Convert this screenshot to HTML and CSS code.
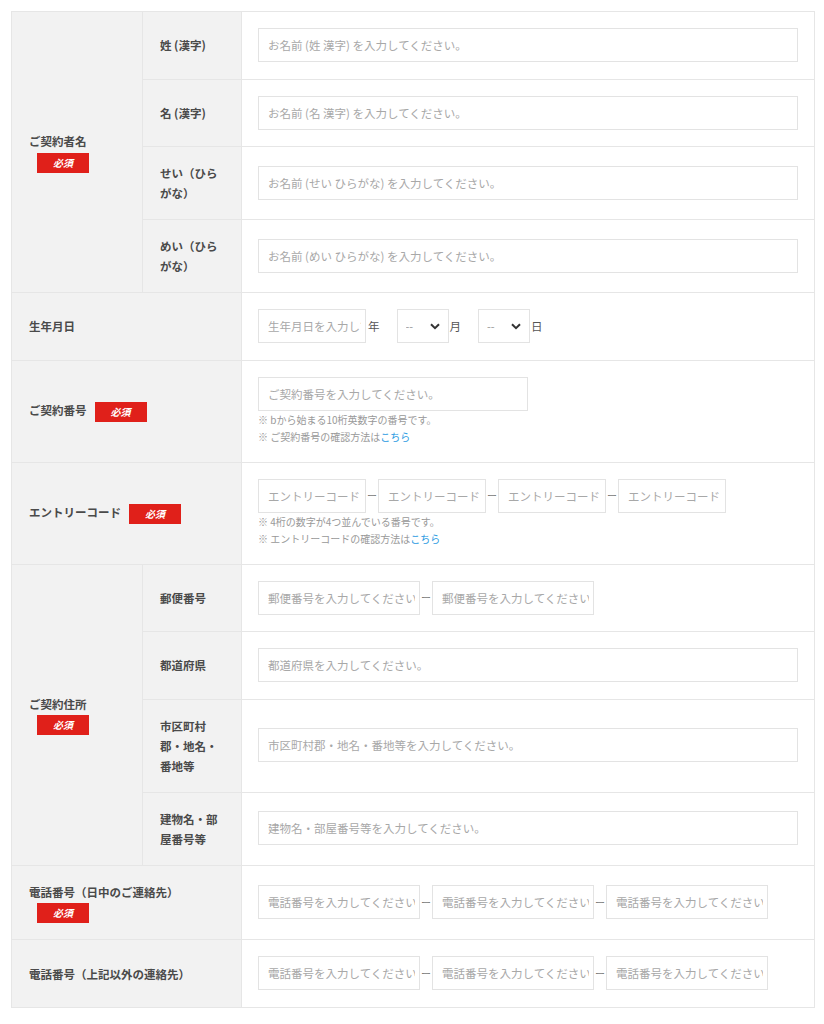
FILE: index.html
```html
<!DOCTYPE html>
<html lang="ja">
<head>
    <meta charset="UTF-8">
    <meta name="viewport" content="width=device-width, initial-scale=1.0">
    <title>ご契約者情報の入力</title>
    <link rel="stylesheet" href="styles.css">
</head>
<body>
    <table class="form-table">
        <colgroup>
            <col class="col-main">
            <col class="col-sub">
            <col>
        </colgroup>
        <tr>
            <th rowspan="4">ご契約者名<span class="badge">必須</span></th>
            <th class="sub">姓 (漢字)</th>
            <td><input class="field" type="text" placeholder="お名前 (姓 漢字) を入力してください。"></td>
        </tr>
        <tr>
            <th class="sub">名 (漢字)</th>
            <td><input class="field" type="text" placeholder="お名前 (名 漢字) を入力してください。"></td>
        </tr>
        <tr>
            <th class="sub">せい（ひらがな）</th>
            <td><input class="field" type="text" placeholder="お名前 (せい ひらがな) を入力してください。"></td>
        </tr>
        <tr>
            <th class="sub">めい（ひらがな）</th>
            <td><input class="field" type="text" placeholder="お名前 (めい ひらがな) を入力してください。"></td>
        </tr>
        <tr>
            <th colspan="2">生年月日</th>
            <td>
                <div class="inline-fields">
                    <span class="date-part"><input class="field field-s" type="text" placeholder="生年月日を入力してください">年</span>
                    <span class="date-part">
                        <span class="select-wrap">
                            <select class="select"><option>--</option></select>
                            <svg class="chevron" width="10" height="7" viewBox="0 0 10 7"><path d="M1 1.2 5 5.2 9 1.2" fill="none" stroke="#333" stroke-width="2"/></svg>
                        </span>月
                    </span>
                    <span class="date-part">
                        <span class="select-wrap">
                            <select class="select"><option>--</option></select>
                            <svg class="chevron" width="10" height="7" viewBox="0 0 10 7"><path d="M1 1.2 5 5.2 9 1.2" fill="none" stroke="#333" stroke-width="2"/></svg>
                        </span>日
                    </span>
                </div>
            </td>
        </tr>
        <tr>
            <th colspan="2">ご契約番号<span class="badge">必須</span></th>
            <td>
                <input class="field field-l" type="text" placeholder="ご契約番号を入力してください。">
                <p class="note">※ bから始まる10桁英数字の番号です。</p>
                <p class="note">※ ご契約番号の確認方法は<a href="#">こちら</a></p>
            </td>
        </tr>
        <tr>
            <th colspan="2">エントリーコード<span class="badge">必須</span></th>
            <td>
                <div class="inline-fields">
                    <input class="field field-s" type="text" placeholder="エントリーコード">
                    <span class="dash">ー</span>
                    <input class="field field-s" type="text" placeholder="エントリーコード">
                    <span class="dash">ー</span>
                    <input class="field field-s" type="text" placeholder="エントリーコード">
                    <span class="dash">ー</span>
                    <input class="field field-s" type="text" placeholder="エントリーコード">
                </div>
                <p class="note">※ 4桁の数字が4つ並んでいる番号です。</p>
                <p class="note">※ エントリーコードの確認方法は<a href="#">こちら</a></p>
            </td>
        </tr>
        <tr>
            <th rowspan="4">ご契約住所<span class="badge">必須</span></th>
            <th class="sub">郵便番号</th>
            <td>
                <div class="inline-fields">
                    <input class="field field-m" type="text" placeholder="郵便番号を入力してください">
                    <span class="dash">ー</span>
                    <input class="field field-m" type="text" placeholder="郵便番号を入力してください">
                </div>
            </td>
        </tr>
        <tr>
            <th class="sub">都道府県</th>
            <td><input class="field" type="text" placeholder="都道府県を入力してください。"></td>
        </tr>
        <tr>
            <th class="sub">市区町村郡・地名・番地等</th>
            <td><input class="field" type="text" placeholder="市区町村郡・地名・番地等を入力してください。"></td>
        </tr>
        <tr>
            <th class="sub">建物名・部屋番号等</th>
            <td><input class="field" type="text" placeholder="建物名・部屋番号等を入力してください。"></td>
        </tr>
        <tr>
            <th colspan="2">電話番号（日中のご連絡先）<span class="badge">必須</span></th>
            <td>
                <div class="inline-fields">
                    <input class="field field-m" type="text" placeholder="電話番号を入力してください">
                    <span class="dash">ー</span>
                    <input class="field field-m" type="text" placeholder="電話番号を入力してください">
                    <span class="dash">ー</span>
                    <input class="field field-m" type="text" placeholder="電話番号を入力してください">
                </div>
            </td>
        </tr>
        <tr>
            <th colspan="2">電話番号（上記以外の連絡先）</th>
            <td>
                <div class="inline-fields">
                    <input class="field field-m" type="text" placeholder="電話番号を入力してください">
                    <span class="dash">ー</span>
                    <input class="field field-m" type="text" placeholder="電話番号を入力してください">
                    <span class="dash">ー</span>
                    <input class="field field-m" type="text" placeholder="電話番号を入力してください">
                </div>
            </td>
        </tr>
    </table>
</body>
</html>
```

FILE: styles.css
```css
body {
    margin: 0;
    padding: 11px 9px 16px 11px;
    background-color: #fff;
    font-family: "Noto Sans CJK JP", "Noto Sans", sans-serif;
    color: #4a4a4a;
}

.form-table {
    width: 804px;
    border-collapse: collapse;
    table-layout: fixed;
}

.col-main {
    width: 131px;
}

.col-sub {
    width: 99px;
}

.form-table th,
.form-table td {
    border: 1px solid #e6e6e6;
    vertical-align: middle;
}

.form-table th {
    padding: 16px 17px;
    background-color: #f2f2f2;
    text-align: left;
    font-size: 11.5px;
    font-weight: bold;
    line-height: 20px;
    color: #4a4a4a;
}

.form-table td {
    padding: 16px 16px 16.5px;
    background-color: #fff;
}

.badge {
    display: inline-block;
    width: 52px;
    height: 20px;
    margin-left: 8px;
    background-color: #e0201a;
    color: #fff;
    font-size: 10px;
    font-weight: bold;
    font-style: italic;
    line-height: 20px;
    text-align: center;
    vertical-align: middle;
}

.field {
    display: block;
    box-sizing: border-box;
    width: 100%;
    height: 34px;
    margin: 0;
    padding: 0 4px 0 9px;
    border: 1px solid #e3e3e3;
    border-radius: 0;
    background-color: #fff;
    font-family: inherit;
    font-size: 11.5px;
    color: #333;
    outline: none;
}

.field::placeholder {
    color: #a8a8a8;
}

.field-s {
    width: 108px;
}

.field-m {
    width: 162px;
}

.field-l {
    width: 270px;
}

.inline-fields {
    display: flex;
    align-items: center;
}

.date-part {
    display: flex;
    align-items: center;
    margin-right: 17px;
    font-size: 11.5px;
    color: #555;
}

.date-part .field {
    margin-right: 2px;
}

.select-wrap {
    position: relative;
    display: block;
    margin-right: 1px;
}

.select {
    display: block;
    box-sizing: border-box;
    width: 52px;
    height: 34px;
    padding: 0 0 0 8px;
    border: 1px solid #e3e3e3;
    border-radius: 0;
    background-color: #fff;
    font-family: inherit;
    font-size: 11px;
    color: #999;
    appearance: none;
    -webkit-appearance: none;
}

.chevron {
    position: absolute;
    top: 14px;
    right: 9px;
    pointer-events: none;
}

.dash {
    width: 12px;
    text-align: center;
    font-size: 10px;
    color: #777;
}

.note {
    margin: 0;
    font-size: 10px;
    line-height: 17.25px;
    color: #999;
}

.note a {
    color: #2b9be2;
    text-decoration: none;
}
```
